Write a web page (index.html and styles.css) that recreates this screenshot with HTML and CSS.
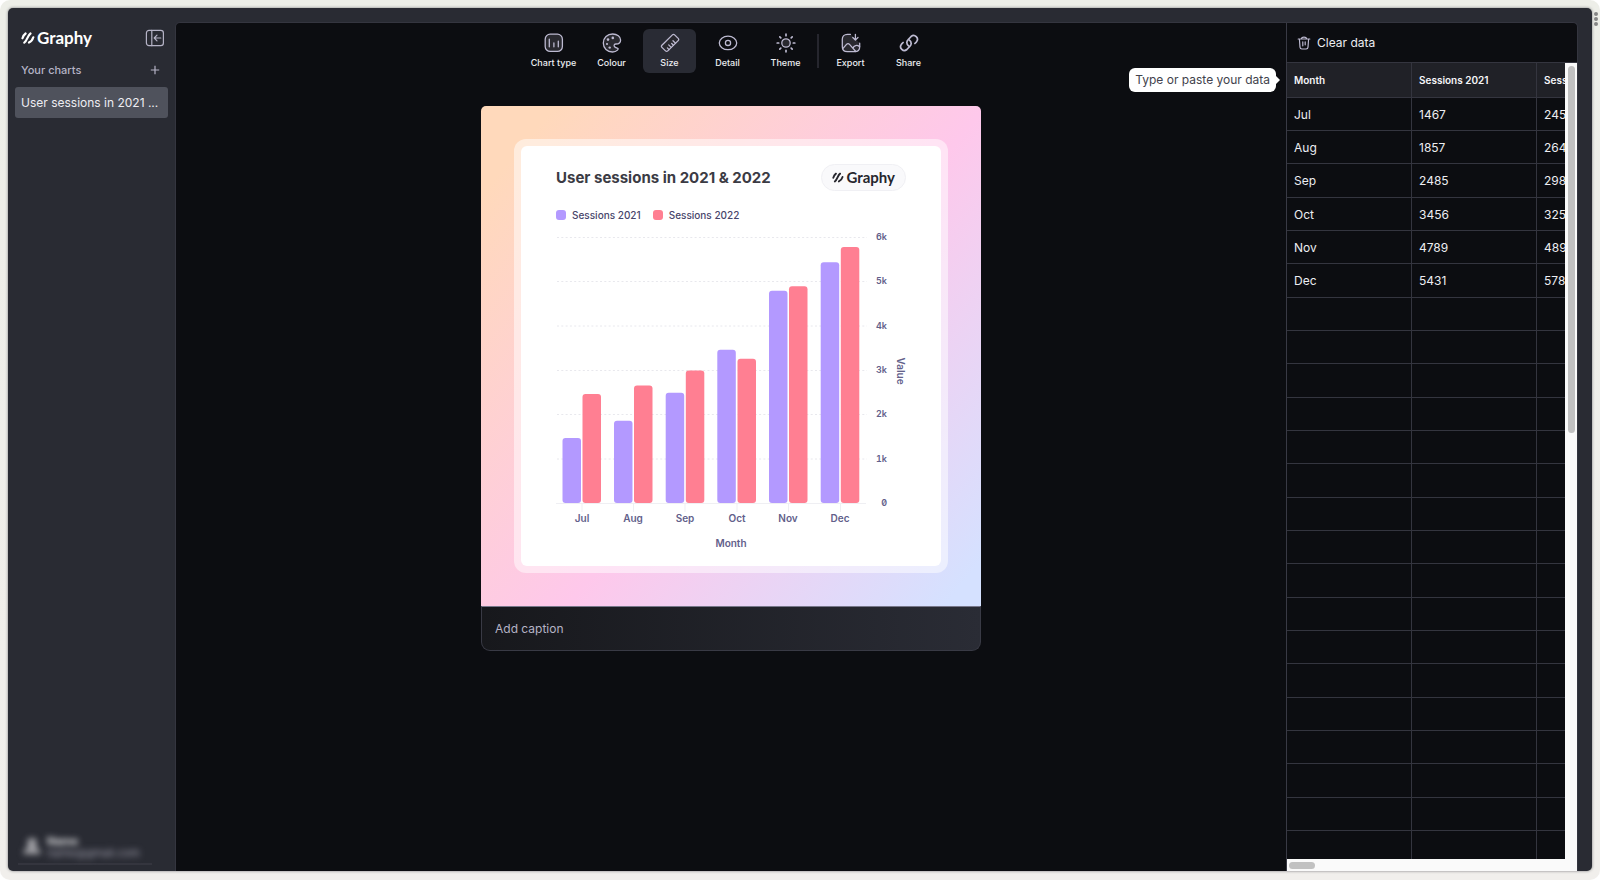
FILE: index.html
```html
<!DOCTYPE html>
<html lang="en">
<head>
<meta charset="utf-8">
<title>Graphy</title>
<link rel="stylesheet" href="styles.css">
</head>
<body>
<svg class="defs" aria-hidden="true">
  <symbol id="mark" viewBox="0 0 14 12"><path d="M1.500 6.300C2 4.500 3 2.600 4.600 1.500M3.300 10.600C6.300 8.600 6.400 3.600 9.500 1.500M8 10.600C10.300 9.600 11.600 7.600 12.300 5.300" fill="none" stroke="currentColor" stroke-width="2.200" stroke-linecap="round"/></symbol>
</svg>
<div class="page">
<button class="dots" aria-label="More"><i></i><i></i><i></i></button>
<div class="app">
  <aside class="sidebar">
    <div class="brand-row">
      <a href="#" class="brand"><svg class="mark"><use href="#mark"/></svg>Graphy</a>
      <button class="collapse" aria-label="Collapse sidebar">
        <svg width="20" height="18" viewBox="0 0 20 18" fill="none" stroke="currentColor" stroke-width="1.2" stroke-linecap="round" stroke-linejoin="round"><rect x="1.4" y="1.3" width="17" height="15.4" rx="2.6"/><path d="M6.8 1.3v15.4M15.8 9H9.4M12 6.2L9.2 9l2.8 2.8"/></svg>
      </button>
    </div>
    <div class="charts-row">
      <h2>Your charts</h2>
      <button class="add" aria-label="New chart"><svg width="10" height="10" viewBox="0 0 10 10" stroke="currentColor" stroke-width="1.2"><path d="M5 .8v8.4M.8 5h8.4"/></svg></button>
    </div>
    <a href="#" class="chart-link">User sessions in 2021 ...</a>
    <div class="account">
      <svg class="avatar" width="20" height="20" viewBox="0 0 20 20" fill="currentColor"><circle cx="10" cy="7" r="5"/><path d="M1 18c1-6 5-7 9-7s8 1 9 7z"/></svg>
      <div class="who"><b>Name</b><span>name@gmail.com</span></div>
    </div>
  </aside>
  <main class="main">
    <section class="canvas">
      <nav class="tools">
        <button class="tool"><svg viewBox="0 0 20 20"><rect class="f" x="1.2" y="1.2" width="17.2" height="17.2" rx="5"/><path d="M5.3 6.2v7.6M9.9 10v3.8M14.3 8.2v5.6"/></svg>Chart type</button>
        <button class="tool"><svg viewBox="0 0 20 20"><path class="f" d="M10.500 19C5.300 19 1.300 15.300 1.300 10S5.400 1 10.600 1c4.600 0 8 2.500 8 5.900 0 3-2.500 4.100-4.600 4.100-1.700 0-2.400 1.200-1.500 2.700.5.800 1.700 1.100 2.800 1.400 1.100.3 1.100 1.200.2 2-1.200 1.200-3 1.900-5 1.900z"/><circle class="d" cx="6" cy="6.600" r="1.300"/><circle class="d" cx="10.800" cy="4.900" r="1.300"/><circle class="d" cx="5" cy="11" r="1.100"/><circle class="d" cx="7.700" cy="14.600" r="1.200"/></svg>Colour</button>
        <button class="tool active" aria-pressed="true"><svg viewBox="0 0 20 20"><path class="f" d="M12.400 1.900L1.900 12.200c-.7.7-.7 1.500 0 2.200l3.600 3.500c.7.7 1.600.7 2.300 0L18.200 7.600c.7-.7.7-1.500 0-2.200l-3.600-3.500c-.7-.7-1.500-.7-2.200 0z"/><path d="M9 16.600l-1.600-1.700M11.200 14.400L8.700 11.900M13.400 12.200l-1.700-1.700M15.500 10.200L13 7.700"/></svg>Size</button>
        <button class="tool"><svg viewBox="0 0 20 20"><path d="M10 3.100c4.900 0 8.700 3.200 8.700 6.800s-3.800 6.800-8.700 6.800-8.700-3.200-8.700-6.800S5.100 3.100 10 3.100z"/><circle cx="10" cy="9.900" r="2.600"/></svg>Detail</button>
        <button class="tool"><svg viewBox="0 0 20 20"><circle class="f" cx="10" cy="10" r="4.200"/><path class="ray" d="M10 1.200v1.500M10 17.300v1.500M1.200 10h1.500M17.300 10h1.500M3.800 3.800l1 1M15.200 15.200l1 1M3.800 16.200l1-1M15.200 4.800l1-1"/></svg>Theme</button>
        <span class="rule"></span>
        <button class="tool"><svg viewBox="0 0 20 20"><path class="f" d="M9.500 1.300H6.300c-3 0-5 2-5 5v7.400c0 3 2 5 5 5h7.400c3 0 5-2 5-5v-3.500"/><path d="M1.800 15.700l3.700-4.300c.9-1 2.100-1 3 0l6.300 7.100M11.900 15.300c1-3 4.100-3.800 6.700-1.600M14.400 1.300v5.500M11.800 4.500l2.600 2.600L17 4.500"/></svg>Export</button>
        <button class="tool"><svg viewBox="0 0 20 20" class="bold"><path d="M9.300 12.700a4 4 0 01-.3-5.900l3.100-3.300a3.800 3.800 0 015.400 5.300l-1.600 1.700M10.700 7.300a4 4 0 01.3 5.900l-3.100 3.300a3.800 3.800 0 01-5.400-5.300l1.600-1.700"/></svg>Share</button>
      </nav>
      <article class="card">
        <div class="backdrop">
          <div class="frame">
            <div class="sheet">
              <header class="sheet-head">
                <h1>User sessions in 2021 &amp; 2022</h1>
                <span class="badge"><svg class="mark"><use href="#mark"/></svg>Graphy</span>
              </header>
              <ul class="legend">
                <li><i class="violet"></i>Sessions 2021</li>
                <li><i class="rose"></i>Sessions 2022</li>
              </ul>
              <svg class="plot" viewBox="0 0 350 324" role="img" aria-label="Sessions per month">
                <path class="grid" d="M1 9.500h310M1 53.500h310M1 98h310M1 142.500h310M1 186.500h310M1 231h310"/>
                <path class="axis" d="M0 275.500h310M26 275v9M77.500 275v9M129 275v9M181 275v9M232.500 275v9M284.500 275v9"/>
                <g class="violet">
                  <rect x="6.500" y="210" width="18.500" height="65" rx="3"/>
                  <rect x="58" y="192.700" width="18.500" height="82.300" rx="3"/>
                  <rect x="109.700" y="164.800" width="18.500" height="110.200" rx="3"/>
                  <rect x="161.300" y="121.800" width="18.500" height="153.200" rx="3"/>
                  <rect x="213" y="62.700" width="18.500" height="212.300" rx="3"/>
                  <rect x="264.700" y="34.300" width="18.500" height="240.700" rx="3"/>
                </g>
                <g class="rose">
                  <rect x="26.500" y="165.900" width="18.500" height="109.100" rx="3"/>
                  <rect x="78" y="157.600" width="18.500" height="117.400" rx="3"/>
                  <rect x="129.800" y="142.600" width="18.500" height="132.400" rx="3"/>
                  <rect x="181.500" y="130.800" width="18.500" height="144.200" rx="3"/>
                  <rect x="233" y="58.200" width="18.500" height="216.800" rx="3"/>
                  <rect x="284.800" y="19" width="18.500" height="256" rx="3"/>
                </g>
                <g class="yl">
                  <text x="331" y="12">6k</text><text x="331" y="56">5k</text><text x="331" y="101">4k</text><text x="331" y="145">3k</text><text x="331" y="189">2k</text><text x="331" y="234">1k</text><text x="331" y="278">0</text>
                </g>
                <g class="xl">
                  <text x="26" y="294">Jul</text><text x="77" y="294">Aug</text><text x="129" y="294">Sep</text><text x="181" y="294">Oct</text><text x="232" y="294">Nov</text><text x="284" y="294">Dec</text>
                  <text x="175" y="319">Month</text>
                  <text transform="translate(341 143) rotate(90)">Value</text>
                </g>
              </svg>
            </div>
          </div>
        </div>
        <input class="caption" type="text" placeholder="Add caption" aria-label="Caption">
      </article>
    </section>
    <section class="data">
      <div class="tip">Type or paste your data</div>
      <button class="clear"><svg width="14" height="14" viewBox="0 0 14 14" fill="none" stroke="currentColor" stroke-width="1.2" stroke-linecap="round" stroke-linejoin="round"><path d="M1.200 3h11.600M4.300 2.800c.2-1.200.8-1.600 2.700-1.600s2.500.4 2.700 1.600M2.400 3l.6 8.300c.1 1.300.7 1.700 1.900 1.700h4.200c1.200 0 1.800-.4 1.900-1.700L11.600 3M5.800 5.800v4M8.200 5.800v3"/></svg>Clear data</button>
      <div class="scroller">
        <div class="view">
          <table>
            <thead><tr><th>Month</th><th>Sessions 2021</th><th>Sessions 2022</th></tr></thead>
            <tbody>
              <tr><td>Jul</td><td>1467</td><td>2456</td></tr>
              <tr><td>Aug</td><td>1857</td><td>2645</td></tr>
              <tr><td>Sep</td><td>2485</td><td>2984</td></tr>
              <tr><td>Oct</td><td>3456</td><td>3254</td></tr>
              <tr><td>Nov</td><td>4789</td><td>4893</td></tr>
              <tr><td>Dec</td><td>5431</td><td>5780</td></tr>
              <tr><td></td><td></td><td></td></tr><tr><td></td><td></td><td></td></tr><tr><td></td><td></td><td></td></tr>
              <tr><td></td><td></td><td></td></tr><tr><td></td><td></td><td></td></tr><tr><td></td><td></td><td></td></tr>
              <tr><td></td><td></td><td></td></tr><tr><td></td><td></td><td></td></tr><tr><td></td><td></td><td></td></tr>
              <tr><td></td><td></td><td></td></tr><tr><td></td><td></td><td></td></tr><tr><td></td><td></td><td></td></tr>
              <tr><td></td><td></td><td></td></tr><tr><td></td><td></td><td></td></tr><tr><td></td><td></td><td></td></tr>
              <tr><td></td><td></td><td></td></tr><tr><td></td><td></td><td></td></tr><tr><td></td><td></td><td></td></tr>
            </tbody>
          </table>
        </div>
        <div class="vbar"><i></i></div>
        <div class="hbar"><i></i></div>
      </div>
    </section>
  </main>
</div>
</div>
</body>
</html>
```
FILE: styles.css
```css
* { box-sizing: border-box; }
body { margin: 0; background: #fff; font-family: Inter, "Liberation Sans", sans-serif; font-size: 12px; color: #ededf2; }
button { font: inherit; color: inherit; background: none; border: 0; padding: 0; cursor: pointer; }
a { color: inherit; text-decoration: none; }
h1, h2, ul { margin: 0; padding: 0; }
.defs { position: absolute; width: 0; height: 0; }
.page { position: relative; height: 100vh; padding: 8px 8px 9px; border-radius: 10px; background: linear-gradient(#edeee8, #f1efec); }
.app { height: 100%; display: grid; grid-template-columns: 167px minmax(0, 1fr); padding-right: 14px; border-radius: 5px; background: #292b33; overflow: hidden; box-shadow: 0 0 3px #77777a; }
.dots { position: absolute; top: 12px; right: 2px; display: grid; gap: 1px; }
.dots i { width: 4px; height: 4px; border-radius: 50%; background: #858585; }

.sidebar { display: flex; flex-direction: column; padding: 20px 7px 6px 7px; color: #b5b3c6; }
.brand-row, .charts-row { display: flex; align-items: center; justify-content: space-between; padding: 0 3px 0 6px; }
.brand { display: flex; align-items: center; gap: 2px; color: #fff; font: 700 17px/20px Lato, sans-serif; }
.mark { width: 14px; height: 12px; flex: none; }
.collapse { height: 20px; }
.collapse svg, .add svg { display: block; }
.charts-row { margin-top: 13px; height: 18px; padding-right: 8px; }
.charts-row h2 { font-size: 11px; font-weight: 500; }
.chart-link { margin-top: 8px; height: 31px; line-height: 31px; padding: 0 6px; border-radius: 3px; background: #4f525c; color: #ededf2; white-space: nowrap; overflow: hidden; }
.account { margin: auto 16px 0 3px; height: 39px; padding: 0 4px; display: flex; gap: 5px; border-bottom: 2px solid #34353e; }
.account > * { filter: blur(3px); }
.avatar { margin-top: 10px; color: #a3a3a8; }
.who { padding-top: 9px; display: grid; align-content: start; font-size: 11px; line-height: 12px; color: #9c9ba9; }
.who b { color: #e5e5e8; }

.main { margin-top: 14px; display: grid; grid-template-columns: minmax(0, 1fr) 291px; min-height: 0; background: #0c0d11; border: 1px solid #34353f; border-bottom: 0; border-radius: 5px 5px 0 0; }
.canvas { display: flex; flex-direction: column; align-items: center; padding-top: 6px; }
.tools { display: flex; gap: 5px; }
.tool { width: 53px; height: 44px; padding-top: 4px; border-radius: 6px; display: flex; flex-direction: column; align-items: center; gap: 4px; font-size: 9px; line-height: 11px; font-weight: 500; white-space: nowrap; color: #ededf2; }
.tool.active { background: #292b34; }
.tool svg { width: 20px; height: 20px; flex: none; fill: none; stroke: #bdbad1; stroke-width: 1.3; stroke-linecap: round; stroke-linejoin: round; }
.tool svg .f { fill: #29292f; }
.tool svg .d { fill: #bdbad1; stroke: none; }
.tool svg .ray { stroke-width: 1.7; }
.tool svg.bold { stroke-width: 1.7; }
.rule { width: 2px; height: 34px; margin-top: 5px; background: #26262e; }

.card { width: 500px; max-width: 100%; margin-top: 33px; }
.backdrop { padding: 33px; border-radius: 5px 5px 0 0; background: linear-gradient(130deg, #ffd9bb 8%, #fec8eb 55%, #d5e1ff 96%); }
.frame { padding: 7px; border-radius: 12px; background: rgba(255, 255, 255, .5); }
.sheet { padding: 18px 35px 14px; border-radius: 6px; background: #fff; }
.sheet-head { display: flex; align-items: center; justify-content: space-between; }
.sheet-head h1 { font-size: 15px; line-height: 27px; font-weight: 700; color: #3b3b44; white-space: nowrap; }
.badge { display: flex; align-items: center; gap: 2px; height: 27px; padding: 0 10px; border: 1px solid #f0f0f4; border-radius: 14px; background: #f9f9fb; color: #26262d; font: 700 15px/25px Lato, sans-serif; }
.badge .mark { width: 12px; height: 11px; }
.legend { display: flex; gap: 12px; margin-top: 17px; list-style: none; font-size: 10px; line-height: 14px; font-weight: 500; color: #47456b; }
.legend li { display: flex; align-items: center; gap: 6px; }
.legend i { width: 10px; height: 10px; border-radius: 3px; }
.legend .violet { background: #b399ff; }
.legend .rose { background: #ff7f92; }
.plot { display: block; width: 100%; margin-top: 6px; font-size: 10px; font-weight: 600; }
.plot .violet { fill: #b399ff; }
.plot .rose { fill: #ff7f92; }
.plot .grid { stroke: #e8e8ed; stroke-width: 1; stroke-dasharray: 2 2.300; fill: none; }
.plot .axis { stroke: #efeff3; stroke-width: 1; fill: none; }
.plot text { fill: #62608a; }
.yl { font-size: 9px; text-anchor: end; font-feature-settings: "zero", "tnum"; }
.xl { text-anchor: middle; }
.caption { display: block; width: 100%; height: 45px; padding: 0 13px; border: 1px solid #393a45; border-top-color: #77778a; border-radius: 0 0 9px 9px; background: linear-gradient(90deg, #17181c, #2a2c35); color: #ededf2; font: 400 12px Inter, sans-serif; outline: 0; }
.caption::placeholder { color: #b5b3c6; opacity: 1; }

.data { position: relative; display: flex; flex-direction: column; min-height: 0; border-left: 1px solid #393a45; }
.tip { position: absolute; right: calc(100% + 11px); top: 45px; height: 24px; padding: 0 6px; border-radius: 6px; background: #fff; color: #42424c; line-height: 24px; white-space: nowrap; }
.tip::after { content: ""; position: absolute; left: 100%; top: 8px; border: 4px solid transparent; border-left-color: #fff; border-right: 0; }
.clear { height: 39px; flex: none; display: flex; align-items: center; gap: 6px; padding-left: 10px; }
.clear svg { color: #bdbad1; }
.scroller { flex: 1; min-height: 0; display: grid; grid-template: minmax(0, 1fr) 12px / minmax(0, 1fr) 12px; border-top: 1px solid #34353f; background: #fafafa; }
.view { overflow: hidden; background: #0c0d11; }
table { width: 375px; table-layout: fixed; border-collapse: separate; border-spacing: 0; }
th, td { height: 33px; padding: 0 7px; border: solid #34353f; border-width: 0 1px 1px 0; text-align: left; }
th { height: 35px; background: #202127; font-size: 10px; font-weight: 600; color: #f5f5f8; }
tr:nth-child(3n) td { height: 34px; }
.vbar i { display: block; width: 7px; height: 367px; margin: 3px; border-radius: 4px; background: #c1c1c1; }
.hbar i { display: block; width: 26px; height: 7px; margin: 3px 2px; border-radius: 4px; background: #c1c1c1; }
```
